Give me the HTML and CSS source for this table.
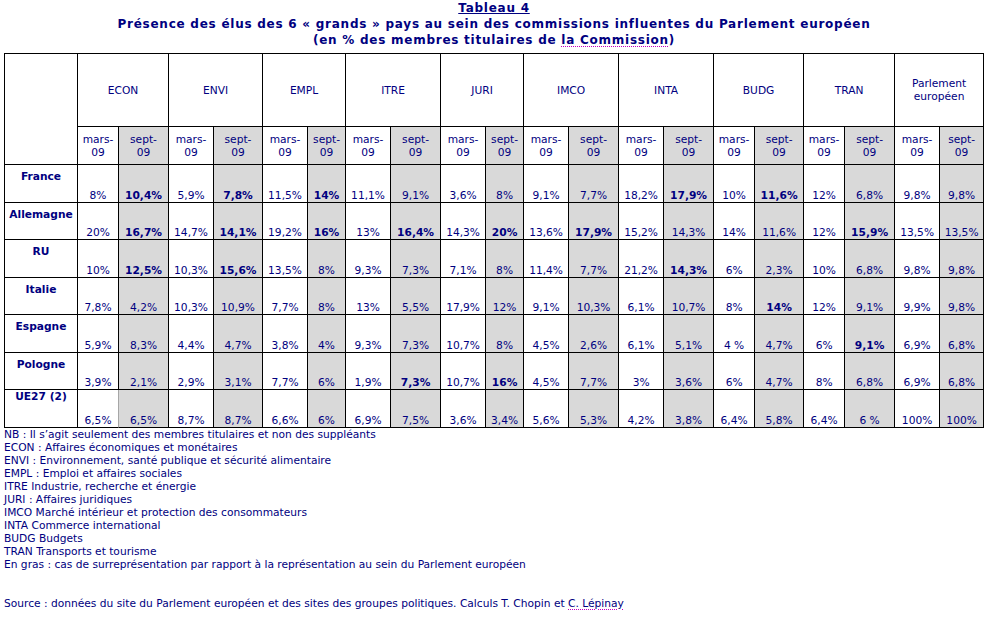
FILE: index.html
```html
<!DOCTYPE html>
<html lang="fr">
<head>
<meta charset="utf-8">
<title>Tableau 4</title>
<link rel="stylesheet" href="styles.css">
</head>
<body>
<div class="page">
  <div class="title">
    <div class="t1">Tableau 4</div>
    <div>Présence des élus des 6 « grands » pays au sein des commissions influentes du Parlement européen</div>
    <div>(en % des membres titulaires de <span class="spell">la Commission</span>)</div>
  </div>
  <table class="data">
    <colgroup>
      <col class="c73"><col class="c41"><col class="c50"><col class="c45"><col class="c49"><col class="c45"><col class="c38"><col class="c45"><col class="c50"><col class="c45"><col class="c38"><col class="c45"><col class="c50"><col class="c45"><col class="c50"><col class="c41"><col class="c49"><col class="c41"><col class="c50"><col class="c45"><col class="c44">
    </colgroup>
    <thead>
      <tr class="h73">
        <th rowspan="2"></th>
        <th colspan="2">ECON</th>
        <th colspan="2">ENVI</th>
        <th colspan="2">EMPL</th>
        <th colspan="2">ITRE</th>
        <th colspan="2">JURI</th>
        <th colspan="2">IMCO</th>
        <th colspan="2">INTA</th>
        <th colspan="2">BUDG</th>
        <th colspan="2">TRAN</th>
        <th colspan="2">Parlement<br>européen</th>
      </tr>
      <tr class="h38 sub">
        <th>mars-<br>09</th><th class="s">sept-<br>09</th>
        <th>mars-<br>09</th><th class="s">sept-<br>09</th>
        <th>mars-<br>09</th><th class="s">sept-<br>09</th>
        <th>mars-<br>09</th><th class="s">sept-<br>09</th>
        <th>mars-<br>09</th><th class="s">sept-<br>09</th>
        <th>mars-<br>09</th><th class="s">sept-<br>09</th>
        <th>mars-<br>09</th><th class="s">sept-<br>09</th>
        <th>mars-<br>09</th><th class="s">sept-<br>09</th>
        <th>mars-<br>09</th><th class="s">sept-<br>09</th>
        <th>mars-<br>09</th><th class="s">sept-<br>09</th>
      </tr>
    </thead>
    <tbody>
      <tr class="h38">
        <th class="lbl">France</th>
        <td>8%</td><td class="s b">10,4%</td><td>5,9%</td><td class="s b">7,8%</td><td>11,5%</td><td class="s b">14%</td><td>11,1%</td><td class="s">9,1%</td><td>3,6%</td><td class="s">8%</td><td>9,1%</td><td class="s">7,7%</td><td>18,2%</td><td class="s b">17,9%</td><td>10%</td><td class="s b">11,6%</td><td>12%</td><td class="s">6,8%</td><td>9,8%</td><td class="s">9,8%</td>
      </tr>
      <tr class="h37">
        <th class="lbl">Allemagne</th>
        <td>20%</td><td class="s b">16,7%</td><td>14,7%</td><td class="s b">14,1%</td><td>19,2%</td><td class="s b">16%</td><td>13%</td><td class="s b">16,4%</td><td>14,3%</td><td class="s b">20%</td><td>13,6%</td><td class="s b">17,9%</td><td>15,2%</td><td class="s">14,3%</td><td>14%</td><td class="s">11,6%</td><td>12%</td><td class="s b">15,9%</td><td>13,5%</td><td class="s">13,5%</td>
      </tr>
      <tr class="h38">
        <th class="lbl">RU</th>
        <td>10%</td><td class="s b">12,5%</td><td>10,3%</td><td class="s b">15,6%</td><td>13,5%</td><td class="s">8%</td><td>9,3%</td><td class="s">7,3%</td><td>7,1%</td><td class="s">8%</td><td>11,4%</td><td class="s">7,7%</td><td>21,2%</td><td class="s b">14,3%</td><td>6%</td><td class="s">2,3%</td><td>10%</td><td class="s">6,8%</td><td>9,8%</td><td class="s">9,8%</td>
      </tr>
      <tr class="h37">
        <th class="lbl">Italie</th>
        <td>7,8%</td><td class="s">4,2%</td><td>10,3%</td><td class="s">10,9%</td><td>7,7%</td><td class="s">8%</td><td>13%</td><td class="s">5,5%</td><td>17,9%</td><td class="s">12%</td><td>9,1%</td><td class="s">10,3%</td><td>6,1%</td><td class="s">10,7%</td><td>8%</td><td class="s b">14%</td><td>12%</td><td class="s">9,1%</td><td>9,9%</td><td class="s">9,8%</td>
      </tr>
      <tr class="h38">
        <th class="lbl">Espagne</th>
        <td>5,9%</td><td class="s">8,3%</td><td>4,4%</td><td class="s">4,7%</td><td>3,8%</td><td class="s">4%</td><td>9,3%</td><td class="s">7,3%</td><td>10,7%</td><td class="s">8%</td><td>4,5%</td><td class="s">2,6%</td><td>6,1%</td><td class="s">5,1%</td><td>4 %</td><td class="s">4,7%</td><td>6%</td><td class="s b">9,1%</td><td>6,9%</td><td class="s">6,8%</td>
      </tr>
      <tr class="h37">
        <th class="lbl">Pologne</th>
        <td>3,9%</td><td class="s">2,1%</td><td>2,9%</td><td class="s">3,1%</td><td>7,7%</td><td class="s">6%</td><td>1,9%</td><td class="s b">7,3%</td><td>10,7%</td><td class="s b">16%</td><td>4,5%</td><td class="s">7,7%</td><td>3%</td><td class="s">3,6%</td><td>6%</td><td class="s">4,7%</td><td>8%</td><td class="s">6,8%</td><td>6,9%</td><td class="s">6,8%</td>
      </tr>
      <tr class="h38">
        <th class="lbl lbl-top">UE27 (2)</th>
        <td class="soft">6,5%</td><td class="s">6,5%</td><td>8,7%</td><td class="s">8,7%</td><td>6,6%</td><td class="s">6%</td><td>6,9%</td><td class="s">7,5%</td><td>3,6%</td><td class="s">3,4%</td><td>5,6%</td><td class="s">5,3%</td><td>4,2%</td><td class="s">3,8%</td><td>6,4%</td><td class="s">5,8%</td><td>6,4%</td><td class="s">6 %</td><td>100%</td><td class="s">100%</td>
      </tr>
    </tbody>
  </table>
  <div class="notes">
    <p>NB : Il s’agit seulement des membres titulaires et non des suppléants</p>
    <p>ECON : Affaires économiques et monétaires</p>
    <p>ENVI : Environnement, santé publique et sécurité alimentaire</p>
    <p>EMPL : Emploi et affaires sociales</p>
    <p>ITRE Industrie, recherche et énergie</p>
    <p>JURI : Affaires juridiques</p>
    <p>IMCO Marché intérieur et protection des consommateurs</p>
    <p>INTA Commerce international</p>
    <p>BUDG Budgets</p>
    <p>TRAN Transports et tourisme</p>
    <p>En gras : cas de surreprésentation par rapport à la représentation au sein du Parlement européen</p>
    <p class="source">Source : données du site du Parlement européen et des sites des groupes politiques. Calculs T. Chopin et <span class="spell">C. Lépinay</span></p>
  </div>
</div>
</body>
</html>
```

FILE: styles.css
```css
body {
  margin: 0;
  background: #ffffff;
  color: #000080;
  font-family: "DejaVu Sans", Verdana, sans-serif;
}

.page {
  width: 980px;
  margin-left: 4px;
}

.title {
  text-align: center;
  font-weight: bold;
  font-size: 12px;
  letter-spacing: 0.75px;
  line-height: 16px;
  padding-bottom: 5px;
}

.t1 {
  text-decoration: underline;
}

.spell {
  text-decoration: underline dotted #c000c0;
  text-decoration-thickness: 1px;
  text-underline-offset: 2px;
}

table.data {
  border-collapse: separate;
  border-spacing: 0;
  table-layout: fixed;
  width: 980px;
  border-top: 1px solid #000;
  border-left: 1px solid #000;
  font-size: 10.67px;
  line-height: 13px;
}

table.data th,
table.data td {
  border-right: 1px solid #000;
  border-bottom: 1px solid #000;
  padding: 0 1px;
  text-align: center;
  font-weight: normal;
  white-space: nowrap;
  overflow: hidden;
}

.c73 { width: 73px; }
.c41 { width: 41px; }
.c50 { width: 50px; }
.c45 { width: 45px; }
.c49 { width: 49px; }
.c38 { width: 38px; }
.c44 { width: 44px; }

.h73 { height: 73px; }
.h38 { height: 38px; }
.h37 { height: 37px; }

table.data thead th {
  vertical-align: middle;
}

table.data td {
  vertical-align: bottom;
}

table.data .s {
  background: #d9d9d9;
}

table.data .b {
  font-weight: bold;
}

table.data th.lbl {
  vertical-align: top;
  font-weight: bold;
  padding-top: 5px;
}

table.data th.lbl-top {
  padding-top: 0;
}

table.data td.soft {
  border-right-color: #a6a6a6;
}

.notes {
  font-size: 10.67px;
  line-height: 13px;
}

.notes p {
  margin: 0;
}

.notes .source {
  margin-top: 26px;
}
```
